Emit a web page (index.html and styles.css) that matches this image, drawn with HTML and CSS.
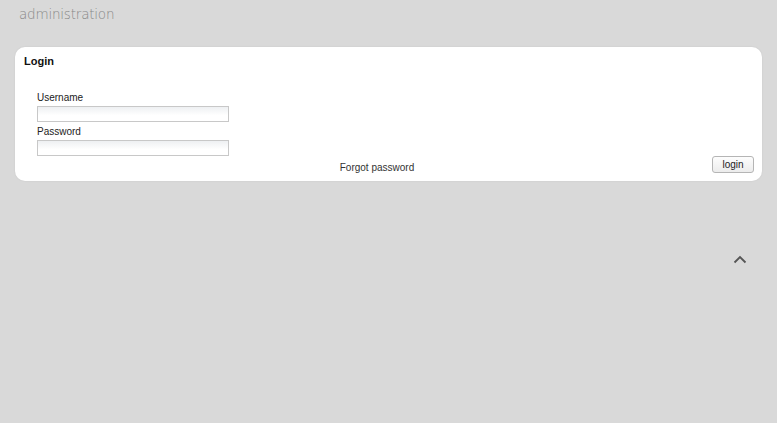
FILE: index.html
```html
<!DOCTYPE html>
<html lang="en">
<head>
    <meta charset="UTF-8">
    <title>administration - Login</title>
    <link rel="stylesheet" href="styles.css">
</head>
<body>
<div class="header">administration</div>

<!-- 登录面板 -->
<div class="panel">
    <h2 class="panel-title">Login</h2>
    <form class="login-form" action="#">
        <label class="field-label" for="username">Username</label>
        <input class="field" id="username" type="text">
        <label class="field-label" for="password">Password</label>
        <input class="field" id="password" type="password">
        <div class="form-bottom">
            <a class="forgot" href="#">Forgot password</a>
            <button class="login-btn" type="button">login</button>
        </div>
    </form>
</div>

<!-- 返回顶部 -->
<a class="to-top" href="#">
    <svg width="14" height="9" viewBox="0 0 14 9">
        <path d="M1.5 7.5 L7 2 L12.5 7.5" fill="none" stroke="#555" stroke-width="1.8"/>
    </svg>
</a>
</body>
</html>
```

FILE: styles.css
```css
* {
    margin: 0;
    padding: 0;
    box-sizing: border-box;
}

body {
    font-family: "Liberation Sans", Arial, sans-serif;
    font-size: 10px;
    color: #222;
    background: #d9d9d9;
    min-height: 100vh;
}

/* 顶部标题 */
.header {
    font-family: "DejaVu Sans", sans-serif;
    font-weight: 200;
    font-size: 13.5px;
    letter-spacing: -0.2px;
    color: #888;
    padding: 6px 0 0 19px;
    height: 47px;
}

/* 面板 */
.panel {
    margin: 0 15px;
    background: #fff;
    border-radius: 10px;
    padding: 7px 8px 7px 9px;
    box-shadow: 0 0 2px rgba(0, 0, 0, 0.08);
}

.panel-title {
    font-size: 11px;
    font-weight: bold;
    line-height: 14px;
    color: #111;
}

.login-form {
    display: flex;
    flex-direction: column;
    padding: 23px 0 0 13px;
}

.field-label {
    line-height: 13px;
    margin-bottom: 2px;
}

.field {
    width: 192px;
    height: 16px;
    border: 1px solid #c8c8c8;
    background: linear-gradient(#eef0f2, #fff 60%);
    margin-bottom: 3px;
}

.form-bottom {
    display: grid;
    grid-template-columns: 1fr auto;
    align-items: start;
    margin-top: -3px;
}

.forgot {
    text-align: center;
    color: #333;
    text-decoration: none;
    padding: 5px 0 0 5px;
    line-height: 13px;
}

.login-btn {
    font-family: "Liberation Sans", Arial, sans-serif;
    font-size: 10px;
    color: #222;
    width: 42px;
    height: 17px;
    border: 1px solid #b5b5b5;
    border-radius: 3px;
    background: linear-gradient(#fdfdfd, #ececec);
    cursor: pointer;
}

/* 返回顶部按钮 */
.to-top {
    position: absolute;
    left: 733px;
    top: 255px;
    display: block;
    width: 14px;
    height: 9px;
}
```
